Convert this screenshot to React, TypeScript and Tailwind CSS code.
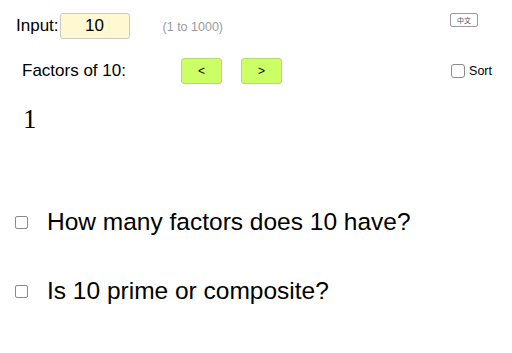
export default function App() {
  return (
    <div
      className="relative h-[353px] w-[512px] bg-white text-black"
      style={{ fontFamily: '"Liberation Sans", Arial, sans-serif' }}
    >
      <div className="flex h-[52px] items-start pl-[16px] pt-[13px]">
        <span className="mt-[4px] text-[17px] leading-[18px]">Input:</span>
        <div className="ml-[1px] flex h-[26px] w-[70px] items-center justify-center rounded-[3px] border border-[#c8c8c8] bg-[#fff8d0] text-[17px]">
          10
        </div>
        <span className="ml-[33px] mt-[5px] text-[12.5px] text-[#9a9a9a]">(1 to 1000)</span>
        <button
          className="ml-auto mr-[34px] flex h-[14px] w-[28px] items-center justify-center rounded-[2px] border border-[#9a9a9a] text-[7px] leading-none text-[#555]"
          style={{ fontFamily: '"Noto Sans CJK SC", sans-serif' }}
        >
          中文
        </button>
      </div>
      <div className="flex h-[32px] items-center pl-[22px] pt-[6px]">
        <span className="text-[17px]">Factors of 10:</span>
        <button className="ml-[55px] flex h-[26px] w-[41px] items-center justify-center rounded-[3px] border border-[#b8d870] bg-[#ccff66] text-[12px]">
          &lt;
        </button>
        <button className="ml-[19px] flex h-[26px] w-[41px] items-center justify-center rounded-[3px] border border-[#b8d870] bg-[#ccff66] text-[12px]">
          &gt;
        </button>
        <span className="ml-auto mr-[20px] flex items-center">
          <span className="h-[14px] w-[14px] rounded-[3px] border border-[#8a8a8a] bg-white" />
          <span className="ml-[4px] text-[12.5px]">Sort</span>
        </span>
      </div>
      <div
        className="pl-[23px] pt-[20px] text-[27px] leading-[30px]"
        style={{ fontFamily: '"Liberation Serif", "Times New Roman", serif' }}
      >
        1
      </div>
      <div className="mt-[74px] flex items-center pl-[15px]">
        <span className="h-[13px] w-[13px] rounded-[2px] border border-[#8a8a8a] bg-white" />
        <span className="ml-[19px] text-[24.5px] leading-[28px]">How many factors does 10 have?</span>
      </div>
      <div className="mt-[41px] flex items-center pl-[15px]">
        <span className="h-[13px] w-[13px] rounded-[2px] border border-[#8a8a8a] bg-white" />
        <span className="ml-[19px] text-[24.5px] leading-[28px]">Is 10 prime or composite?</span>
      </div>
    </div>
  );
}
